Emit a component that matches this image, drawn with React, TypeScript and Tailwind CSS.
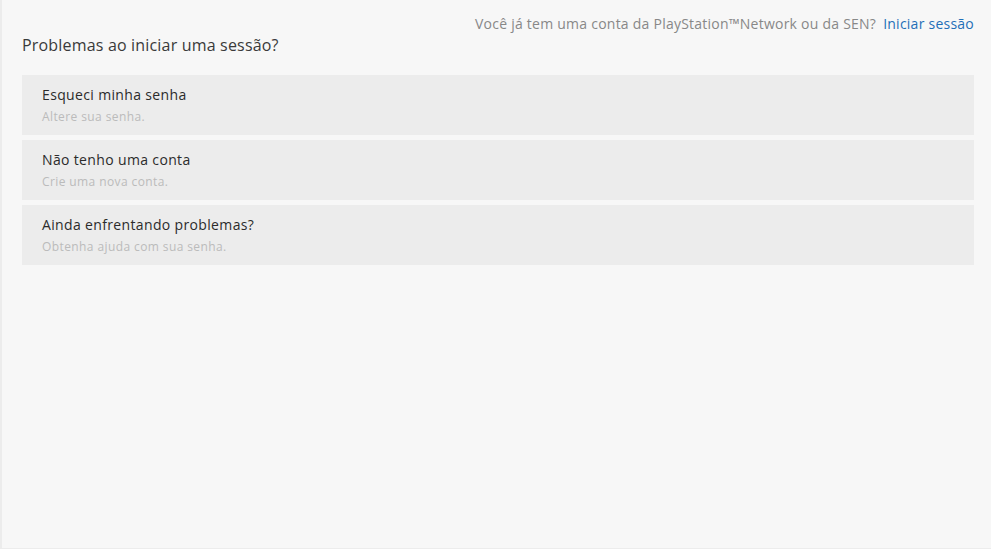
const items = [
  { title: "Esqueci minha senha", hint: "Altere sua senha." },
  { title: "Não tenho uma conta", hint: "Crie uma nova conta." },
  { title: "Ainda enfrentando problemas?", hint: "Obtenha ajuda com sua senha." },
];

export default function App() {
  return (
    <div
      className="h-[549px] w-full overflow-hidden border-b border-l-2 border-[#ececec] bg-[#f7f7f7] pl-[20px] pr-[17px] pt-[14px]"
      style={{ fontFamily: '"Open Sans", "Liberation Sans", sans-serif' }}
    >
      <div className="flex justify-end text-[14px] leading-[20px] tracking-[0.24px]">
        <span className="text-[#888]">Você já tem uma conta da PlayStation™Network ou da SEN?</span>
        <a href="#" className="ml-[7px] text-[#1f6fb8]">
          Iniciar sessão
        </a>
      </div>
      <h1 className="text-[16px] leading-[22px] tracking-[0.18px] text-[#3a3a3a]">
        Problemas ao iniciar uma sessão?
      </h1>
      <ul className="mt-[19px] flex flex-col gap-[5px]">
        {items.map((item) => (
          <li key={item.title} className="h-[60px] bg-[#ececec] px-[20px] pt-[10px]">
            <div className="text-[14px] leading-[20px] tracking-[0.35px] text-[#2b2b2b]">{item.title}</div>
            <div className="mt-[3px] text-[12px] leading-[18px] tracking-[0.4px] text-[#bbb]">{item.hint}</div>
          </li>
        ))}
      </ul>
    </div>
  );
}
